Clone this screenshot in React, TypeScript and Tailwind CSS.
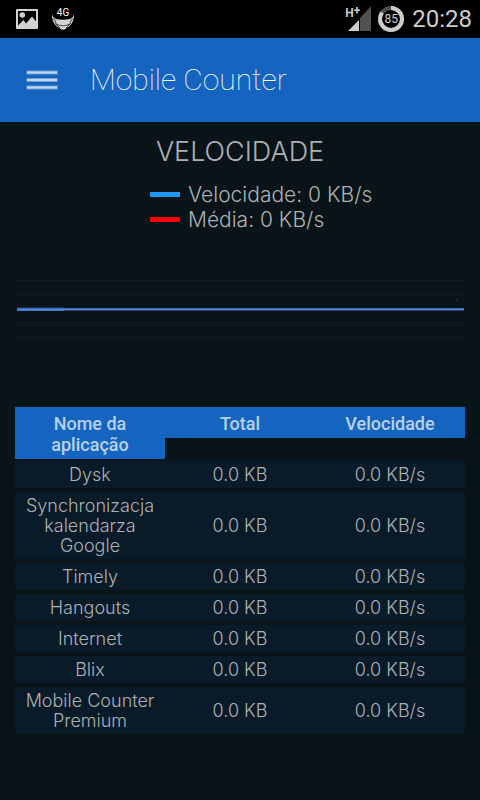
interface AppUsage {
  name: string;
  total: string;
  speed: string;
}

const usage: AppUsage[] = [
  { name: "Dysk", total: "0.0 KB", speed: "0.0 KB/s" },
  { name: "Synchronizacja kalendarza Google", total: "0.0 KB", speed: "0.0 KB/s" },
  { name: "Timely", total: "0.0 KB", speed: "0.0 KB/s" },
  { name: "Hangouts", total: "0.0 KB", speed: "0.0 KB/s" },
  { name: "Internet", total: "0.0 KB", speed: "0.0 KB/s" },
  { name: "Blix", total: "0.0 KB", speed: "0.0 KB/s" },
  { name: "Mobile Counter Premium", total: "0.0 KB", speed: "0.0 KB/s" },
];

const gridLines = [20, 34, 63, 77];

const StatusBar = () => (
  <div className="flex h-[38px] items-center justify-between bg-black pr-2 pl-4 font-['Roboto'] font-normal text-[#cccccc]">
    <div className="flex items-center gap-3.5">
      <svg width="22" height="20" viewBox="0 0 22 20">
        <path
          fillRule="evenodd"
          fill="#d2d2d2"
          d="M1 0h20a1 1 0 0 1 1 1v18a1 1 0 0 1-1 1H1a1 1 0 0 1-1-1V1a1 1 0 0 1 1-1zM2 2v14.500L7.500 11l2.500 3.500L16 7.500l4 5V2z"
        />
        <circle cx="6.3" cy="6" r="2.8" fill="#d2d2d2" />
      </svg>
      <div className="relative h-[22px] w-[22px]">
        <svg className="absolute inset-0" width="22" height="22" viewBox="0 0 22 22">
          <path
            fill="#d2d2d2"
            d="M0 6Q1 10 4 11Q11 12.500 18 11Q21 10 22 6C22.500 13 19 18 14 20.500Q11 23 8 20.500C3 18-0.500 13 0 6z"
          />
          <path
            fill="none"
            stroke="#111"
            strokeWidth="0.7"
            d="M0.500 10.500L3 12L4 16L8 20M21.500 10.500L19 12L18 16L14 20M4 16Q11 19.500 18 16"
          />
        </svg>
        <span className="absolute inset-x-0 top-0 text-center text-[10px] leading-[10px] text-white">
          4G
        </span>
      </div>
    </div>
    <div className="flex items-center">
      <div className="relative">
        <svg width="27" height="26" viewBox="0 0 27 26">
          <path fill="#505050" d="M15 12L26 0v25H15z" />
          <path fill="#cccccc" d="M3 25L14 14v11z" />
        </svg>
        <span className="absolute top-0 left-0 flex text-[12px] leading-[14px] font-bold">
          H<span className="leading-[10px]">+</span>
        </span>
      </div>
      <div className="relative ml-1.5 flex h-[26px] w-[26px] items-center justify-center">
        <svg className="absolute inset-0" width="26" height="26" viewBox="0 0 26 26">
          <circle cx="13" cy="13" r="11" fill="none" stroke="#505050" strokeWidth="4" />
          <circle
            cx="13"
            cy="13"
            r="11"
            fill="none"
            stroke="#cccccc"
            strokeWidth="4"
            pathLength="100"
            strokeDasharray="85 15"
            transform="rotate(-90 13 13)"
          />
        </svg>
        <span className="text-[12px] leading-none">85</span>
      </div>
      <span className="ml-2 text-[24px] leading-none">20:28</span>
    </div>
  </div>
);

const Toolbar = () => (
  <header className="flex h-[84px] items-center bg-[#1565c0] px-[26px]">
    <button type="button" aria-label="Menu" className="block">
      <svg width="32" height="20" viewBox="0 0 32 20">
        <path stroke="#6d9fd8" strokeWidth="4" d="M0.500 2.500h31M0.500 10h31M0.500 17.500h31" />
        <path stroke="#c3d8f0" strokeWidth="2" d="M1 2.500h30M1 10h30M1 17.500h30" />
      </svg>
    </button>
    <h1 className="ml-8 font-['Roboto'] text-[30px] leading-9 font-thin text-white">
      Mobile Counter
    </h1>
  </header>
);

const SpeedChart = () => (
  <svg className="mt-7 block h-[97px] w-full" viewBox="0 0 447 97" preserveAspectRatio="none">
    {gridLines.map((y) => (
      <path key={y} stroke="#151c22" d={`M0 ${y + 0.5}h447`} />
    ))}
    <path stroke="#1c2f4c" d="M0 47.500h47" />
    <path stroke="#3f66b8" d="M0 48.500h447" />
    <path stroke="#3d8fe8" d="M0 49.500h447" />
    <path stroke="#403557" d="M0 50.500h447" />
    <path stroke="#4a73b8" d="M0 50.500h47" />
    <path stroke="#2c353a" d="M439 40.500h2" />
  </svg>
);

const UsageTable = () => (
  <table className="block">
    <thead className="block font-['Roboto'] text-[18px] leading-[21px] text-[#b9d1ec]">
      <tr className="grid grid-cols-3 items-start">
        <th scope="col" className="bg-[#1565c0] px-5 pt-1.5 pb-1 font-medium">
          Nome da aplicação
        </th>
        <th scope="col" className="bg-[#1565c0] pt-1.5 pb-1 font-medium">
          Total
        </th>
        <th scope="col" className="bg-[#1565c0] pt-1.5 pb-1 font-medium">
          Velocidade
        </th>
      </tr>
    </thead>
    <tbody className="mt-0.5 flex flex-col gap-1 text-center text-[18px] leading-5">
      {usage.map((app) => (
        <tr key={app.name} className="grid grid-cols-3 items-center bg-[#091a29] pt-1 pb-[3px]">
          <td className="px-2">{app.name}</td>
          <td>{app.total}</td>
          <td>{app.speed}</td>
        </tr>
      ))}
    </tbody>
  </table>
);

export default function App() {
  return (
    <div className="min-h-screen bg-[#091419] font-['Inter','Open_Sans',sans-serif] font-light text-[#adb1b4]">
      <StatusBar />
      <Toolbar />
      <main className="px-[15px] pt-3">
        <h2 className="text-center text-[27px] leading-9">VELOCIDADE</h2>
        <ul className="mt-3 ml-[30%] text-[21px] leading-[25px]">
          <li className="flex items-center gap-2">
            <span className="h-[5px] w-[30px] bg-[#2196f3]" />
            Velocidade: 0 KB/s
          </li>
          <li className="flex items-center gap-2">
            <span className="h-[5px] w-[30px] bg-[#ff0000]" />
            Média: 0 KB/s
          </li>
        </ul>
        <div className="mb-[50px] pr-px pl-0.5">
          <SpeedChart />
        </div>
        <UsageTable />
      </main>
    </div>
  );
}
